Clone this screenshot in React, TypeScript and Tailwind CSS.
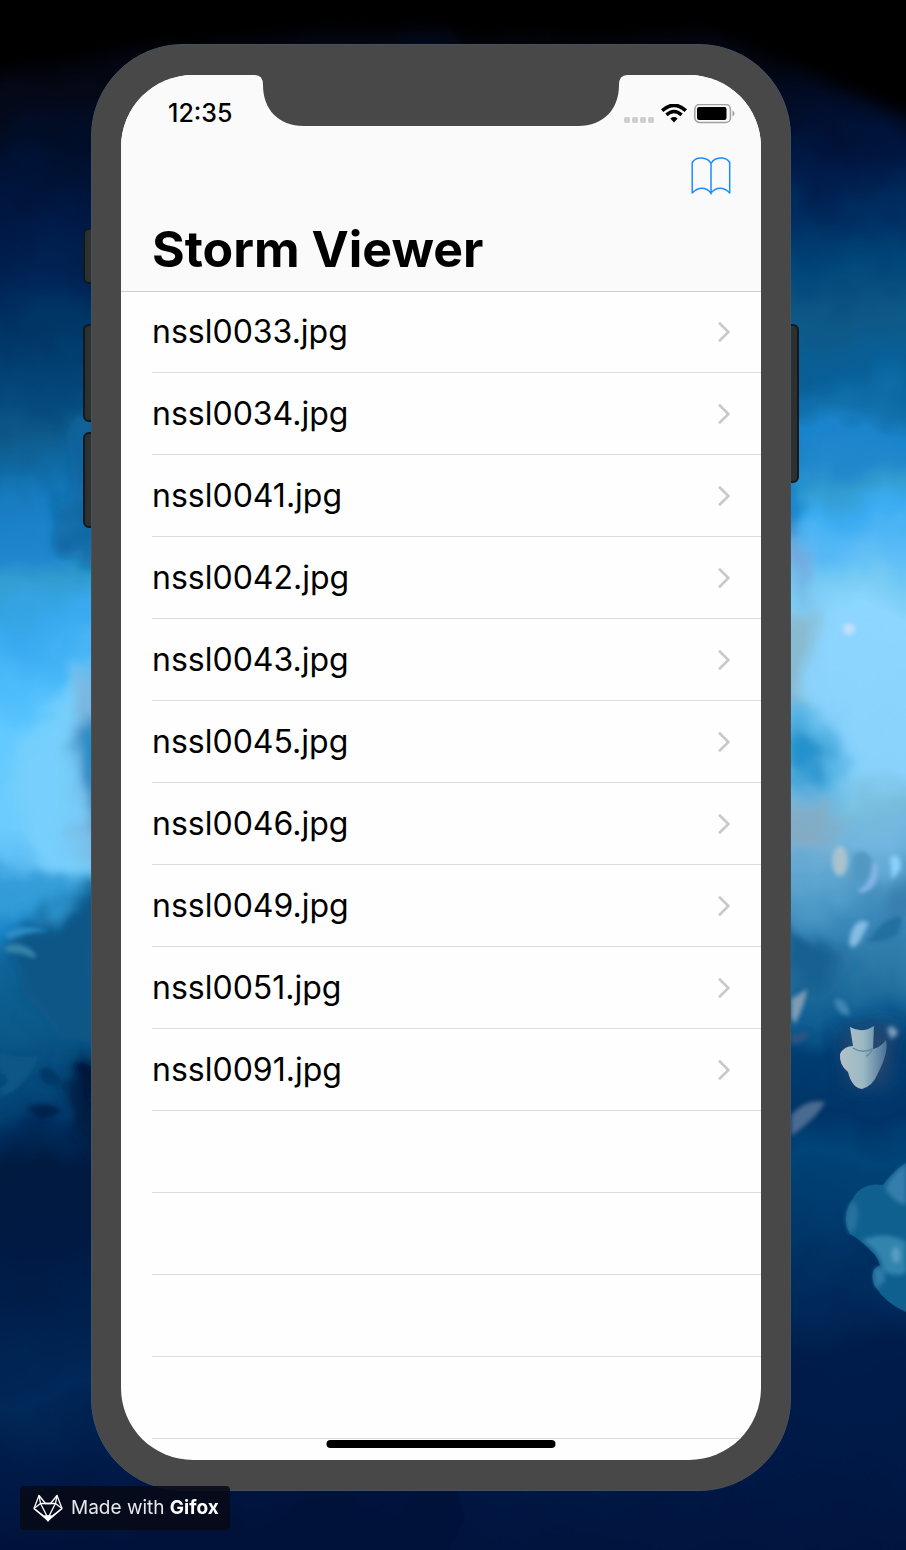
import React from "react";

const files = [
  "nssl0033.jpg",
  "nssl0034.jpg",
  "nssl0041.jpg",
  "nssl0042.jpg",
  "nssl0043.jpg",
  "nssl0045.jpg",
  "nssl0046.jpg",
  "nssl0049.jpg",
  "nssl0051.jpg",
  "nssl0091.jpg",
];

const emptyRows = [0, 1, 2, 3];

type Stop = [number, string];

const leftStops: Stop[] = [
  [0, "#000000"], [50, "#010206"], [90, "#050816"], [150, "#000e2a"], [230, "#001a48"],
  [290, "#002658"], [340, "#003868"], [390, "#04487c"], [435, "#0e5a8a"], [470, "#0f6aa4"],
  [500, "#1a80c6"], [550, "#2288d0"], [580, "#309cd0"], [630, "#3aaaf0"], [680, "#4cbcfa"],
  [740, "#62caff"], [830, "#6ccdfc"], [870, "#56b6f0"], [900, "#309cd0"], [925, "#1a84cc"],
  [960, "#0f6498"], [1030, "#0b5888"], [1090, "#044678"], [1130, "#002c5c"],
  [1180, "#001a40"], [1250, "#001a44"], [1330, "#002250"], [1400, "#002858"],
  [1470, "#001a48"], [1550, "#00123a"],
];

const rightStops: Stop[] = [
  [0, "#000000"], [40, "#03050c"], [90, "#030a20"], [130, "#000f30"], [170, "#001a48"],
  [220, "#003064"], [260, "#004478"], [310, "#0e5886"], [370, "#086098"], [410, "#1272ae"],
  [430, "#1a84cc"], [465, "#2288cc"], [490, "#309cd0"], [515, "#3cacf2"], [545, "#58baf6"],
  [580, "#78ccf4"], [620, "#8cd6ff"], [770, "#88d2fc"], [800, "#78bedd"], [840, "#70b4e0"],
  [880, "#58a2cc"], [920, "#3c8abc"], [980, "#2a76a4"], [1020, "#0e5c92"], [1055, "#003c70"],
  [1110, "#003468"], [1160, "#004478"], [1220, "#003a6c"], [1290, "#002a5c"],
  [1350, "#001c4a"], [1440, "#001a48"], [1550, "#00143e"],
];

function Gradient({ id, stops }: { id: string; stops: Stop[] }) {
  return (
    <linearGradient id={id} gradientUnits="userSpaceOnUse" x1="0" y1="0" x2="0" y2="1550">
      {stops.map(([y, color]) => (
        <stop key={y} offset={y / 1550} stopColor={color} />
      ))}
    </linearGradient>
  );
}

function Wallpaper() {
  return (
    <svg
      className="absolute inset-0 h-full w-full"
      viewBox="0 0 906 1550"
      preserveAspectRatio="none"
      aria-hidden="true"
    >
      <defs>
        <Gradient id="skyLeft" stops={leftStops} />
        <Gradient id="skyRight" stops={rightStops} />
        <filter id="paint" filterUnits="userSpaceOnUse" x="-80" y="-80" width="1066" height="1710" colorInterpolationFilters="sRGB">
          <feTurbulence type="fractalNoise" baseFrequency="0.014" numOctaves="3" seed="4" result="noise" />
          <feDisplacementMap in="SourceGraphic" in2="noise" scale="60" xChannelSelector="R" yChannelSelector="G" />
          <feGaussianBlur stdDeviation="1.2" />
        </filter>
        <filter id="soft" x="-50%" y="-50%" width="200%" height="200%">
          <feGaussianBlur stdDeviation="9" />
        </filter>
        <filter id="fine" x="-30%" y="-30%" width="160%" height="160%">
          <feGaussianBlur stdDeviation="2" />
        </filter>
        <linearGradient id="shell" x1="0" y1="0" x2="1" y2="0">
          <stop offset="0" stopColor="#b4c0c8" />
          <stop offset="0.5" stopColor="#9bb9c4" />
          <stop offset="1" stopColor="#4b7198" />
        </linearGradient>
      </defs>

      <g filter="url(#paint)">
        <g transform="translate(0 6) skewY(-8)">
          <rect x="-80" y="-100" width="540" height="1820" fill="url(#skyLeft)" />
        </g>
        <rect x="455" y="-80" width="530" height="1710" fill="url(#skyRight)" />
        <g filter="url(#soft)">
          <path d="M62 430L95 410V575Q76 560 70 530Q75 500 62 470Z" fill="#0f639c" />
          <path d="M10 800Q50 680 95 640V885Q40 890 28 860Z" fill="#76cffc" />
          <path d="M78 660H110V880H80Z" fill="#7bb5de" />
          <path d="M84 730Q95 710 110 710V820Q86 810 82 760Z" fill="#1a84c0" />
          <path d="M15 945Q55 905 110 890V1050H70Q20 1000 15 945Z" fill="#0c5686" />
          <path d="M72 1070L110 1060V1160Q60 1130 72 1070Z" fill="#001a42" />
          <path d="M-80 860H-10Q60 900 90 880L60 905Q20 925 -80 915Z" fill="#309cd8" />
          <path d="M780 440H806V540H780Z" fill="#1480c4" />
          <path d="M780 600H810V710H780Z" fill="#88b8cc" />
          <path d="M780 700Q830 710 846 770L835 790H780Z" fill="#55b4e4" />
          <path d="M780 735Q825 740 828 765Q820 785 780 780Z" fill="#2490cc" />
          <path d="M780 800Q820 785 840 810L820 850H780Z" fill="#83abc4" />
          <path d="M780 920Q830 930 850 960L830 995H780Z" fill="#176192" />
          <path d="M875 880L916 865V915L870 930Z" fill="#397fae" />
          <path d="M780 540Q812 535 820 560L800 590Z" fill="#73a9dd" />
        </g>
      </g>

      <g filter="url(#soft)">
        <path d="M690 -20H926V125Q800 70 690 20Z" fill="#010206" />
        <path d="M-20 -20H690V30H300Q120 40 -20 72Z" fill="#000" />
        <path d="M842 1032L895 1024L886 1086H850Z" fill="#27476f" />
      </g>

      <g filter="url(#fine)">
        <path d="M3 933Q20 922 48 931Q25 932 8 940Z" fill="#298cc4" />
        <path d="M4 946Q25 940 37 956L33 958Q20 952 6 952Z" fill="#3583a8" />
        <path d="M0 1052Q20 1060 38 1055Q38 1070 12 1092L0 1097V1088Q15 1080 0 1072Z" fill="#0e5686" />
        <path d="M40 1070Q50 1060 62 1083Q48 1090 40 1078Z" fill="#003868" />
        <path d="M75 1065Q85 1060 92 1068V1110L86 1085Z" fill="#00163a" />
        <path d="M28 1107Q50 1100 62 1112L40 1120Z" fill="#00204e" />
        <circle cx="849" cy="629" r="6" fill="#c4dff8" />
        <ellipse cx="840" cy="861" rx="8" ry="15" fill="#a9c2cd" />
        <path d="M853 856Q866 844 874 864Q878 885 853 881Z" fill="#5199c2" />
        <path d="M872 862L878 865Q880 890 860 893L858 889Q872 885 872 862Z" fill="#83b5e6" />
        <path d="M890 858Q900 850 901 868L892 880Z" fill="#89d1fb" />
        <path d="M851 932Q858 916 869 923L860 941Q852 952 849 943Z" fill="#84bbe2" />
        <path d="M871 938Q880 922 899 915Q906 920 896 936Q876 945 866 941Z" fill="#236f9f" />
        <path d="M791 1017L791 999Q800 994 807 989Q806 1003 795 1024Z" fill="#7e9bb4" />
        <path d="M791 1034L810 1032Q804 1045 791 1044Z" fill="#2c5580" />
        <path d="M791 1115Q807 1098 825 1102Q818 1117 791 1136Z" fill="#496a91" />
        <path d="M887 1029Q894 1022 898 1034L891 1039Z" fill="#7b9dbb" />
        <path d="M834 1000Q846 995 850 1015Q838 1017 834 1000Z" fill="#3f86b3" />
      </g>

      <path
        d="M850 1027Q862 1034 874 1026L873 1049Q881 1047 886 1040Q889 1052 878 1073Q873 1086 862 1089Q852 1088 848 1072Q839 1065 840 1054Q844 1046 853 1046Z"
        fill="url(#shell)"
      />
      <path d="M853 1048Q862 1054 872 1049Q870 1055 866 1056" fill="none" stroke="#6888a0" strokeWidth="1.5" />
      <path
        d="M906 1163Q892 1172 883 1185Q861 1182 852 1200Q841 1217 850 1234Q860 1239 875 1255Q879 1261 880 1265Q869 1270 874 1285Q886 1304 906 1312Z"
        fill="#10608f"
      />
      <g filter="url(#fine)">
        <path d="M906 1164Q894 1172 885 1188Q893 1202 906 1205Z" fill="#347eac" />
        <path d="M852 1201Q861 1205 857 1223Q855 1232 850 1234Q841 1217 852 1201Z" fill="#26719f" />
        <path d="M862 1240Q888 1230 906 1242V1273Q893 1278 883 1270Q881 1252 862 1240Z" fill="#3384ad" />
        <ellipse cx="896" cy="1255" rx="4" ry="8" fill="#599fc9" />
        <path d="M875 1268Q885 1266 885 1280L877 1289Q872 1278 875 1268Z" fill="#327aa8" />
      </g>
    </svg>
  );
}

function StatusIcons() {
  return (
    <div className="flex items-center gap-[7px]" role="img" aria-label="No signal, Wi-Fi, full battery">
      <div className="flex gap-0.5 pt-3">
        {[0, 1, 2, 3].map((dot) => (
          <span key={dot} className="size-1.5 rounded-xs bg-[#cdcdcd]" />
        ))}
      </div>
      <svg width="26" height="20" viewBox="0 0 26 20" fill="none" stroke="#000">
        <path d="M1.2 6.6Q13-4 24.800 6.600" strokeWidth="3.6" />
        <path d="M5.400 10.900Q13 4.200 20.600 10.900" strokeWidth="3.4" />
        <path d="M9.300 14.500Q13 11.600 16.700 14.500L13 18.400Z" fill="#000" stroke="none" />
      </svg>
      <svg width="41" height="20" viewBox="0 0 41 20">
        <rect x="0.8" y="0.6" width="35.6" height="17.8" rx="4.5" fill="none" stroke="#a0a0a0" strokeWidth="1.5" />
        <rect x="3" y="3" width="29.5" height="13" rx="2.2" fill="#000" />
        <path d="M38.5 6.600Q40.500 7.600 40.500 9.600T38.500 12.600Z" fill="#a0a0a0" />
      </svg>
    </div>
  );
}

function BookIcon() {
  return (
    <svg width="40" height="38" viewBox="0 0 40 38" fill="none" stroke="#1a8cff" strokeWidth="1.5" strokeLinejoin="round">
      <path d="M20 6.5C16-.6 5-.6 1.2 5.5V36C7 29.500 15 29.500 20 36C25 29.500 33 29.500 38.700 36V5.500C35-.6 24-.6 20 6.500V37.500" />
    </svg>
  );
}

function Chevron() {
  return (
    <svg width="14" height="22" viewBox="0 0 14 22" fill="none" stroke="#c9c9cc" strokeWidth="2.6" aria-hidden="true">
      <path d="M2 1.800L11.400 11L2 20.200" />
    </svg>
  );
}

function FoxLogo() {
  return (
    <svg width="30" height="28" viewBox="0 0 30 28" fill="none" stroke="#fff" strokeWidth="1.3" strokeLinejoin="round" aria-hidden="true">
      <path d="M6 1.500L1 14.500L15 26.500L29 14.500L24 1.500L17.500 9.500H12.500Z" />
      <path d="M6 1.500L7.500 9.500H22.500L24 1.500M1 14.500L7.500 9.500L15 24L22.500 9.500L29 14.500M1 14.500L12 23M29 14.500L18 23" />
      <path d="M11.800 22H18.200L15 27Z" fill="#fff" />
    </svg>
  );
}

function Notch() {
  return (
    <svg
      className="absolute top-0 left-1/2 -translate-x-1/2"
      width="380"
      height="52"
      viewBox="0 0 380 52"
      aria-hidden="true"
    >
      <path
        d="M0 0H4Q12 0 12 10C12 34 27 51 53 51H327C353 51 368 34 368 10Q368 0 376 0H380V-1H0Z"
        fill="#484848"
      />
    </svg>
  );
}

export default function App() {
  return (
    <main className="relative min-h-screen overflow-hidden bg-[#00143e] pt-11 pr-[115px] pb-[59px] pl-[91px] font-['Inter',sans-serif] text-black">
      <Wallpaper />

      <div className="relative">
        <span className="absolute top-[184px] -left-2 h-[56px] w-4 rounded-md border-2 border-[#111820] bg-[#2c302f]" />
        <span className="absolute top-[280px] -left-2 h-[98px] w-4 rounded-md border-2 border-[#111820] bg-[#2c302f]" />
        <span className="absolute top-[388px] -left-2 h-[96px] w-4 rounded-md border-2 border-[#111820] bg-[#2c302f]" />
        <span className="absolute top-[280px] -right-2 h-[159px] w-4 rounded-md border-2 border-[#111820] bg-[#2c302f]" />

        <div className="relative rounded-[92px] border border-[#46525a] bg-[#484848] px-[29px] pt-[30px] pb-[30px]">
          <div className="relative overflow-hidden rounded-[72px] bg-[#fefefe] pb-[21px]">
            <Notch />

            <header className="border-b border-[#cfcfcf] bg-[#fafafa]">
              <div className="flex h-[78px] items-center justify-between pr-[26px] pl-[47px]">
                <time className="text-[25px] font-medium">12:35</time>
                <StatusIcons />
              </div>
              <div className="flex h-[46px] items-center justify-end pr-[30px]">
                <button type="button" aria-label="Bookmarks">
                  <BookIcon />
                </button>
              </div>
              <h1 className="flex h-[92px] items-center pt-2 pl-[31px] text-[50px] font-bold">Storm Viewer</h1>
            </header>

            <ul className="-mt-px pl-[31px]">
              {files.map((name) => (
                <li key={name} className="border-b border-[#dcdcdc]">
                  <a href={`#${name}`} className="flex h-[81px] items-center justify-between pr-[30px] text-[32px]">
                    {name}
                    <Chevron />
                  </a>
                </li>
              ))}
              {emptyRows.map((row) => (
                <li key={row} className="h-[82px] border-b border-[#dcdcdc]" />
              ))}
            </ul>

            <div className="absolute bottom-3 left-1/2 h-2 w-[229px] -translate-x-1/2 rounded-full bg-black" />
          </div>
        </div>
      </div>

      <div className="absolute bottom-5 left-5 flex h-11 w-[210px] items-center gap-2 rounded-sm bg-[#070a18]/90 pl-[13px] text-[19px] whitespace-nowrap text-[#e8e8ec]">
        <FoxLogo />
        <span>
          Made with <b className="font-bold text-white">Gifox</b>
        </span>
      </div>
    </main>
  );
}
